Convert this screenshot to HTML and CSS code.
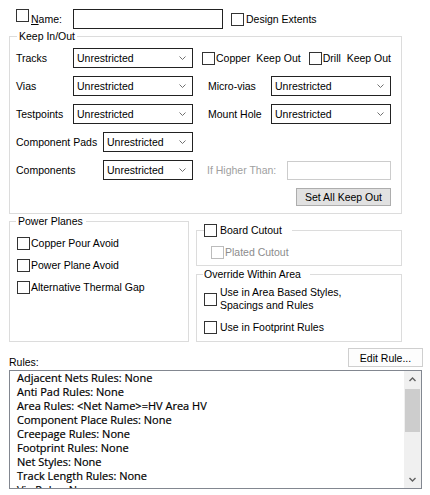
FILE: index.html
```
<!DOCTYPE html>
<html>
<head>
<meta charset="utf-8">
<link rel="stylesheet" href="styles.css">
</head>
<body>
<div class="page">
  <div class="toprow">
    <span class="cb"></span>
    <span class="name-label"><u>N</u>ame:</span>
    <span class="textbox"></span>
    <span class="cb cb-design"></span>
    <span class="design-label">Design Extents</span>
  </div>

  <fieldset class="group keep">
    <legend>Keep In/Out</legend>
    <div class="keep-grid">
      <span class="lbl">Tracks</span>
      <div class="combo"><span class="combo-text">Unrestricted</span><svg class="chev" width="7" height="4" viewBox="0 0 7 4"><polyline points="0.5,0.5 3.5,3.5 6.5,0.5" fill="none" stroke="#707070" stroke-width="1"/></svg></div>
      <div class="checks">
        <span class="chk-item copper"><span class="cb"></span><span class="chk-text">Copper&nbsp; Keep Out</span></span>
        <span class="chk-item"><span class="cb"></span><span class="chk-text">Drill&nbsp; Keep Out</span></span>
      </div>

      <span class="lbl">Vias</span>
      <div class="combo"><span class="combo-text">Unrestricted</span><svg class="chev" width="7" height="4" viewBox="0 0 7 4"><polyline points="0.5,0.5 3.5,3.5 6.5,0.5" fill="none" stroke="#707070" stroke-width="1"/></svg></div>
      <span class="lbl rlbl">Micro-vias</span>
      <div class="combo"><span class="combo-text">Unrestricted</span><svg class="chev" width="7" height="4" viewBox="0 0 7 4"><polyline points="0.5,0.5 3.5,3.5 6.5,0.5" fill="none" stroke="#707070" stroke-width="1"/></svg></div>

      <span class="lbl">Testpoints</span>
      <div class="combo"><span class="combo-text">Unrestricted</span><svg class="chev" width="7" height="4" viewBox="0 0 7 4"><polyline points="0.5,0.5 3.5,3.5 6.5,0.5" fill="none" stroke="#707070" stroke-width="1"/></svg></div>
      <span class="lbl rlbl">Mount Hole</span>
      <div class="combo"><span class="combo-text">Unrestricted</span><svg class="chev" width="7" height="4" viewBox="0 0 7 4"><polyline points="0.5,0.5 3.5,3.5 6.5,0.5" fill="none" stroke="#707070" stroke-width="1"/></svg></div>

      <div class="pair">
        <span class="lbl">Component Pads</span>
        <div class="combo small"><span class="combo-text">Unrestricted</span><svg class="chev" width="7" height="4" viewBox="0 0 7 4"><polyline points="0.5,0.5 3.5,3.5 6.5,0.5" fill="none" stroke="#707070" stroke-width="1"/></svg></div>
      </div>
      <span></span><span></span>

      <div class="pair">
        <span class="lbl">Components</span>
        <div class="combo small"><span class="combo-text">Unrestricted</span><svg class="chev" width="7" height="4" viewBox="0 0 7 4"><polyline points="0.5,0.5 3.5,3.5 6.5,0.5" fill="none" stroke="#707070" stroke-width="1"/></svg></div>
      </div>
      <div class="pair higher">
        <span class="lbl disabled">If Higher Than:</span>
        <span class="textbox disabled-box"></span>
      </div>

      <div class="btn-row"><span class="btn">Set All Keep Out</span></div>
    </div>
  </fieldset>

  <div class="grouprow">
    <fieldset class="group power">
      <legend>Power Planes</legend>
      <div class="vlist">
        <span class="chk-item"><span class="cb"></span><span class="chk-text">Copper Pour Avoid</span></span>
        <span class="chk-item"><span class="cb"></span><span class="chk-text">Power Plane Avoid</span></span>
        <span class="chk-item"><span class="cb"></span><span class="chk-text">Alternative Thermal Gap</span></span>
      </div>
    </fieldset>
    <div class="rightcol">
      <fieldset class="group board">
        <legend><span class="cb"></span><span class="legend-text">Board Cutout</span></legend>
        <span class="chk-item plated"><span class="cb cb-disabled"></span><span class="chk-text disabled-text">Plated Cutout</span></span>
      </fieldset>
      <fieldset class="group override">
        <legend>Override Within Area</legend>
        <div class="vlist override-list">
          <span class="chk-item"><span class="cb"></span><span class="chk-text two">Use in Area Based Styles,<br>Spacings and Rules</span></span>
          <span class="chk-item"><span class="cb"></span><span class="chk-text">Use in Footprint Rules</span></span>
        </div>
      </fieldset>
    </div>
  </div>

  <div class="rules-head">
    <span class="rules-label">Rules:</span>
    <span class="btn btn-light">Edit Rule...</span>
  </div>
  <div class="listbox">
    <div class="list-content">
      <div class="li">Adjacent Nets Rules: None</div>
      <div class="li">Anti Pad Rules: None</div>
      <div class="li">Area Rules: &lt;Net Name&gt;=HV Area HV</div>
      <div class="li">Component Place Rules: None</div>
      <div class="li">Creepage Rules: None</div>
      <div class="li">Footprint Rules: None</div>
      <div class="li">Net Styles: None</div>
      <div class="li">Track Length Rules: None</div>
      <div class="li">Via Rules: None</div>
    </div>
    <div class="vscroll">
      <div class="sb-btn"><svg width="7" height="5" viewBox="0 0 7 5"><polyline points="0.5,4 3.5,1 6.5,4" fill="none" stroke="#606060" stroke-width="1.4"/></svg></div>
      <div class="sb-track"><div class="sb-thumb"></div></div>
      <div class="sb-btn"><svg width="7" height="5" viewBox="0 0 7 5"><polyline points="0.5,1 3.5,4 6.5,1" fill="none" stroke="#606060" stroke-width="1.4"/></svg></div>
    </div>
  </div>
</div>
</body>
</html>
```
FILE: styles.css
```
* { box-sizing: border-box; }
html, body { margin: 0; padding: 0; background: #fff; }
body {
  font-family: "Liberation Sans", Arial, sans-serif;
  font-size: 10.5px;
  color: #000;
  width: 430px;
  height: 495px;
  overflow: hidden;
}
.page { padding: 9px 7px 0 9px; }

.cb {
  display: inline-block;
  width: 13px;
  height: 13px;
  border: 1px solid #333;
  background: #fff;
  flex: none;
}
.cb-disabled { border-color: #bcbcbc; }
.disabled { color: #a0a0a0; }
.disabled-text { color: #8c8c8c; }

/* top row */
.toprow { display: flex; align-items: flex-start; padding-left: 7px; height: 20px; }
.name-label { margin-left: 2px; width: 42px; line-height: 20px; }
.name-label u { text-decoration: underline; }
.textbox { display: block; width: 150px; height: 20px; border: 1px solid #222; background: #fff; flex: none; }
.cb-design { margin-left: 8px; margin-top: 4px; }
.design-label { margin-left: 2px; margin-top: 4px; line-height: 13px; }

/* group boxes */
.group {
  border: 1px solid #dcdcdc;
  margin: 0;
  min-width: 0;
}
.group > legend { padding: 0 2px; line-height: 13px; }

.keep { width: 393px; margin-top: 1px; padding: 5px 10px 7px 6px; }
.keep > legend { margin-left: 1px; }

.keep-grid {
  display: grid;
  grid-template-columns: 57px 120px 78px 120px;
  grid-template-rows: repeat(5, 20px) 18px;
  row-gap: 8px;
}
.lbl { align-self: center; white-space: nowrap; }
.rlbl { padding-left: 15px; }

.combo {
  display: flex;
  align-items: center;
  height: 20px;
  border: 1px solid #222;
  background: #fff;
  padding-left: 3px;
}
.combo-text { flex: 1; white-space: nowrap; }
.chev { flex: none; margin-right: 6px; }
.combo.small { width: 90px; }

.checks { grid-column: 3 / 5; display: flex; align-items: center; padding-left: 9px; }
.chk-item { display: flex; align-items: center; white-space: nowrap; }
.chk-item.copper { width: 107px; }
.chk-text { margin-left: 1px; line-height: 13px; }

.pair { grid-column: 1 / 3; display: flex; align-items: center; justify-content: space-between; }
.pair.higher { grid-column: 3 / 5; padding-left: 14px; }
.disabled-box { width: 104px; height: 19px; border-color: #cccccc; }

.btn-row { grid-column: 1 / 5; display: flex; justify-content: flex-end; }
.btn {
  display: flex;
  align-items: center;
  justify-content: center;
  width: 95px;
  height: 18px;
  background: #e1e1e1;
  border: 1px solid #adadad;
  white-space: nowrap;
}

/* lower groups */
.grouprow { display: flex; align-items: stretch; margin-top: 1px; }
.power { width: 180px; padding: 9px 6px 6px 6px; }
.power > legend { padding: 0 3px 0 2px; }
.vlist { display: flex; flex-direction: column; gap: 9px; margin-left: 1px; }
.vlist .chk-text { margin-left: 1px; }

.rightcol { width: 206px; margin-left: 7px; margin-top: 9px; display: flex; flex-direction: column; }
.board { padding: 9px 6px 6px 7px; }
.board > legend { display: flex; align-items: center; padding: 0 10px 0 0; }
.legend-text { margin-left: 3px; }
.plated { margin-left: 7px; }

.override { margin-top: 2px; padding: 5px 6px 7px 7px; }
.override > legend { padding: 0 9px 0 1px; margin-left: -1px; }
.override-list { margin-left: 0; }
.override-list .chk-text { margin-left: 3px; }
.chk-text.two { line-height: 13px; }

/* rules */
.rules-head { display: flex; justify-content: space-between; align-items: flex-end; margin-top: 6px; }
.rules-label { line-height: 13px; margin-bottom: -2px; }
.btn-light { width: 75px; height: 19px; background: #fdfdfd; border-color: #cfcfcf; }

.listbox {
  display: flex;
  margin-top: 3px;
  margin-right: 1px;
  height: 119px;
  border: 1px solid #828790;
  background: #fff;
}
.list-content {
  flex: 1;
  overflow: hidden;
  padding-left: 7px;
  font-family: "Open Sans", "Noto Sans", sans-serif;
  font-size: 11px;
  -webkit-text-stroke: 0.2px #000;
}
.li { line-height: 14px; white-space: nowrap; }

.vscroll { width: 17px; flex: none; display: flex; flex-direction: column; background: #f0f0f0; }
.sb-btn { height: 17px; display: flex; align-items: center; justify-content: center; flex: none; }
.sb-track { flex: 1; }
.sb-thumb { margin: 1px 1px 0 1px; height: 43px; background: #cdcdcd; }
```
